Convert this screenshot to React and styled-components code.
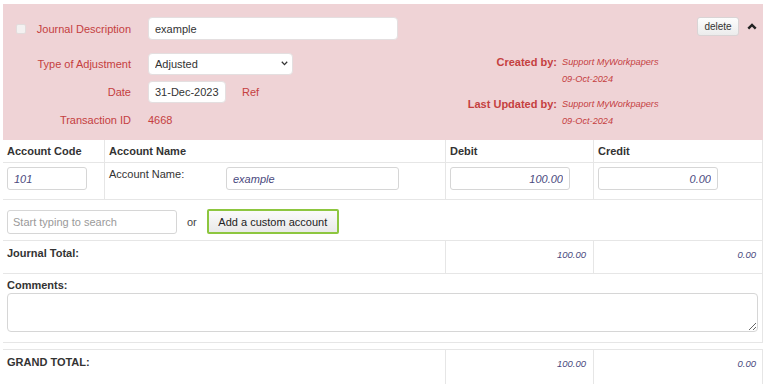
import React from "react";
import styled, { createGlobalStyle } from "styled-components";

const GlobalStyle = createGlobalStyle`
  html, body { margin: 0; padding: 0; background: #fff; }
  body {
    font-family: "Liberation Sans", Arial, Helvetica, sans-serif;
    font-size: 11px;
    color: #333;
  }
  * { box-sizing: border-box; }
`;

const RED = "#c5403f";
const LINE = "#e6e6e6";
const VALUE = "#4a4a7e";

const Page = styled.div`
  padding: 4px 4px 0 3px;
  width: 767px;
`;

const Panel = styled.section`
  display: flex;
  align-items: flex-start;
  background: #efd3d6;
  padding: 13px 6px 9px 0;
`;

const Form = styled.div`
  display: flex;
  flex-direction: column;
  width: 395px;
`;

const FormRow = styled.div`
  display: grid;
  grid-template-columns: 128px 1fr;
  column-gap: 17px;
  align-items: center;
  height: ${(p) => p.$h}px;
  margin-top: ${(p) => p.$mt || 0}px;
`;

const Label = styled.label`
  color: ${RED};
  text-align: right;
  font-size: 11px;
  white-space: nowrap;
`;

const CheckLabel = styled(Label)`
  display: flex;
  align-items: center;
  justify-content: space-between;
  padding-left: 13px;
`;

const Check = styled.span`
  display: inline-block;
  width: 10px;
  height: 10px;
  border-radius: 2px;
  background: #f4f1f1;
  border: 1px solid #e2dcdc;
`;

const Field = styled.input`
  width: ${(p) => p.$w}px;
  height: ${(p) => p.$h || 23}px;
  border: 1px solid #e4dfe0;
  border-radius: 4px;
  background: #fff;
  padding: 0 6px;
  font-family: inherit;
  font-size: 11px;
  color: #333;
  outline: none;
`;

const SelectWrap = styled.div`
  position: relative;
  width: 145px;
  height: 22px;
`;

const Select = styled.select`
  appearance: none;
  width: 100%;
  height: 100%;
  border: 1px solid #e4dfe0;
  border-radius: 4px;
  background: #fff;
  padding: 0 6px;
  font-family: inherit;
  font-size: 11px;
  color: #333;
  outline: none;
`;

const SelectArrow = styled.svg`
  position: absolute;
  right: 5px;
  top: 8px;
  pointer-events: none;
`;

const InlineGroup = styled.div`
  display: flex;
  align-items: center;
  gap: ${(p) => p.$gap || 16}px;
`;

const RedText = styled.span`
  color: ${RED};
  font-size: 11px;
`;

const Info = styled.div`
  margin-left: 69px;
  margin-top: 36px;
  display: flex;
  flex-direction: column;
  gap: 8px;
`;

const InfoGroup = styled.div`
  display: grid;
  grid-template-columns: 90px auto;
  column-gap: 5px;
  grid-auto-rows: 17px;
  align-items: center;
`;

const InfoLabel = styled.span`
  color: ${RED};
  font-weight: bold;
  font-size: 11px;
  text-align: right;
  white-space: nowrap;
`;

const InfoValue = styled.span`
  color: ${RED};
  font-style: italic;
  font-size: 9.2px;
  white-space: nowrap;
  grid-column: 2;
`;

const Actions = styled.div`
  margin-left: auto;
  display: flex;
  align-items: center;
  gap: 8px;
`;

const DeleteButton = styled.button`
  width: 42px;
  height: 19px;
  padding: 0;
  border: 1px solid #d9d4d5;
  border-radius: 3px;
  background: linear-gradient(#fdfdfd, #ececec);
  font-family: inherit;
  font-size: 10px;
  color: #333;
`;

const Table = styled.div`
  width: 760px;
  border-right: 1px solid ${LINE};
  margin-top: ${(p) => p.$mt || 0}px;
  border-top: ${(p) => (p.$top ? `1px solid ${LINE}` : "none")};
`;

const Row = styled.div`
  display: grid;
  grid-template-columns: 101px 341px 148px 1fr;
  min-height: ${(p) => p.$h}px;
  border-bottom: ${(p) => (p.$last ? "none" : `1px solid ${LINE}`)};
`;

const Cell = styled.div`
  grid-column: span ${(p) => p.$span || 1};
  border-left: ${(p) => (p.$divider ? `1px solid ${LINE}` : "none")};
  padding: ${(p) => p.$pad || "0 4px"};
  display: flex;
  align-items: ${(p) => p.$align || "flex-start"};
  justify-content: ${(p) => (p.$right ? "flex-end" : "flex-start")};
`;

const Head = styled.span`
  font-weight: bold;
  font-size: 11px;
  color: #333;
  line-height: 13px;
`;

const Amount = styled.span`
  font-style: italic;
  font-size: 9.5px;
  color: ${VALUE};
  line-height: 13px;
`;

const ValueInput = styled.input`
  width: ${(p) => p.$w}px;
  height: 23px;
  border: 1px solid #d6d6d6;
  border-radius: 3px;
  background: #fff;
  padding: 0 6px;
  font-family: inherit;
  font-style: italic;
  font-size: 11px;
  color: ${VALUE};
  text-align: ${(p) => (p.$right ? "right" : "left")};
  outline: none;
`;

const NameCell = styled.div`
  display: flex;
  align-items: flex-start;
`;

const NameLabel = styled.span`
  width: 117px;
  padding-top: 1px;
  font-size: 11px;
  line-height: 13px;
  color: #333;
`;

const SearchInput = styled.input`
  width: 170px;
  height: 24px;
  border: 1px solid #d6d6d6;
  border-radius: 3px;
  padding: 0 5px;
  font-family: inherit;
  font-size: 11px;
  color: #333;
  outline: none;
  &::placeholder { color: #9a9a9a; }
`;

const Or = styled.span`
  font-size: 11px;
  color: #444;
`;

const CustomButton = styled.button`
  width: 132px;
  height: 25px;
  border: 2px solid #8dc63f;
  border-radius: 2px;
  background: linear-gradient(#fafafa, #e9e9e9);
  font-family: inherit;
  font-size: 11px;
  color: #222;
  padding: 0;
`;

const Comments = styled.div`
  display: flex;
  flex-direction: column;
  gap: 1px;
  width: 100%;
`;

const TextArea = styled.textarea`
  display: block;
  width: 751px;
  height: 39px;
  border: 1px solid #d6d6d6;
  border-radius: 4px;
  resize: vertical;
  font-family: inherit;
  font-size: 11px;
  outline: none;
`;

export default function App() {
  return (
    <>
      <GlobalStyle />
      <Page>
        <Panel>
          <Form>
            <FormRow $h={23}>
              <CheckLabel>
                <Check />
                Journal Description
              </CheckLabel>
              <Field $w={250} defaultValue="example" />
            </FormRow>
            <FormRow $h={22} $mt={13}>
              <Label>Type of Adjustment</Label>
              <SelectWrap>
                <Select defaultValue="Adjusted">
                  <option>Adjusted</option>
                </Select>
                <SelectArrow width="7" height="5" viewBox="0 0 7 5">
                  <polyline points="0.8,0.8 3.5,3.6 6.2,0.8" fill="none" stroke="#333" strokeWidth="1.3" />
                </SelectArrow>
              </SelectWrap>
            </FormRow>
            <FormRow $h={22} $mt={6}>
              <Label>Date</Label>
              <InlineGroup>
                <Field $w={78} $h={22} defaultValue="31-Dec-2023" />
                <RedText>Ref</RedText>
              </InlineGroup>
            </FormRow>
            <FormRow $h={22} $mt={6}>
              <Label>Transaction ID</Label>
              <RedText>4668</RedText>
            </FormRow>
          </Form>

          <Info>
            <InfoGroup>
              <InfoLabel>Created by:</InfoLabel>
              <InfoValue>Support MyWorkpapers</InfoValue>
              <InfoValue>09-Oct-2024</InfoValue>
            </InfoGroup>
            <InfoGroup>
              <InfoLabel>Last Updated by:</InfoLabel>
              <InfoValue>Support MyWorkpapers</InfoValue>
              <InfoValue>09-Oct-2024</InfoValue>
            </InfoGroup>
          </Info>

          <Actions>
            <DeleteButton>delete</DeleteButton>
            <svg width="10" height="7" viewBox="0 0 10 7">
              <polyline points="1.3,5.6 5,1.9 8.7,5.6" fill="none" stroke="#222" strokeWidth="2.4" strokeLinejoin="miter" />
            </svg>
          </Actions>
        </Panel>

        <Table>
          <Row $h={23}>
            <Cell $align="center"><Head>Account Code</Head></Cell>
            <Cell $divider $align="center"><Head>Account Name</Head></Cell>
            <Cell $divider $align="center"><Head>Debit</Head></Cell>
            <Cell $divider $align="center"><Head>Credit</Head></Cell>
          </Row>
          <Row $h={37}>
            <Cell $pad="4px 4px 0"><ValueInput $w={80} defaultValue="101" /></Cell>
            <Cell $divider $pad="4px 4px 0">
              <NameCell>
                <NameLabel>Account Name:</NameLabel>
                <ValueInput $w={173} defaultValue="example" />
              </NameCell>
            </Cell>
            <Cell $divider $pad="4px 4px 0"><ValueInput $w={120} $right defaultValue="100.00" /></Cell>
            <Cell $divider $pad="4px 4px 0"><ValueInput $w={120} $right defaultValue="0.00" /></Cell>
          </Row>
          <Row $h={41}>
            <Cell $span={4} $pad="9px 4px 0">
              <InlineGroup $gap={10}>
                <SearchInput placeholder="Start typing to search" />
                <Or>or</Or>
                <CustomButton>Add a custom account</CustomButton>
              </InlineGroup>
            </Cell>
          </Row>
          <Row $h={33}>
            <Cell $span={2} $pad="6px 4px 0"><Head>Journal Total:</Head></Cell>
            <Cell $divider $right $pad="7px 7px 0 4px"><Amount>100.00</Amount></Cell>
            <Cell $divider $right $pad="7px 6px 0 4px"><Amount>0.00</Amount></Cell>
          </Row>
          <Row $h={68}>
            <Cell $span={4} $pad="5px 4px 10px">
              <Comments>
                <Head>Comments:</Head>
                <TextArea />
              </Comments>
            </Cell>
          </Row>
        </Table>

        <Table $mt={6} $top>
          <Row $h={40} $last>
            <Cell $span={2} $pad="6px 4px 0"><Head>GRAND TOTAL:</Head></Cell>
            <Cell $divider $right $pad="7px 7px 0 4px"><Amount>100.00</Amount></Cell>
            <Cell $divider $right $pad="7px 6px 0 4px"><Amount>0.00</Amount></Cell>
          </Row>
        </Table>
      </Page>
    </>
  );
}
